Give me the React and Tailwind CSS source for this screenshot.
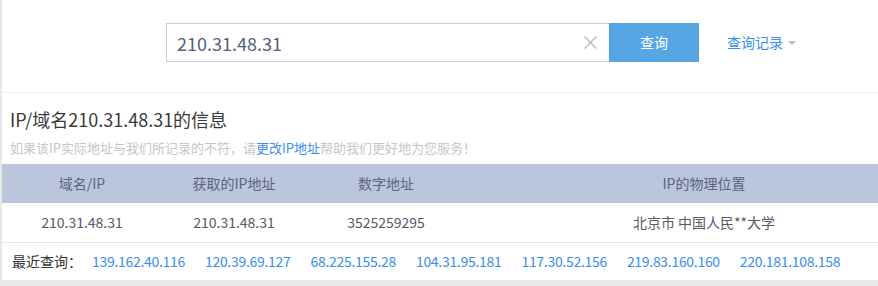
export default function App() {
  const recent = [
    "139.162.40.116",
    "120.39.69.127",
    "68.225.155.28",
    "104.31.95.181",
    "117.30.52.156",
    "219.83.160.160",
    "220.181.108.158",
  ];

  return (
    <div
      className="w-[878px] h-[286px] overflow-hidden bg-[#e8e8e8] pl-[2px]"
      style={{ fontFamily: '"Noto Sans CJK SC", "Noto Sans", sans-serif' }}
    >
      <div className="bg-white h-[280px]">
        {/* search bar */}
        <div className="h-[93px] border-b border-[#f0f0f0] flex items-start pt-[23px] pl-[164px]">
          <div className="flex items-center w-[443px] h-[39px] border border-[#c5cde0] border-r-0 pl-[10px] pr-[12px]">
            <span className="flex-1 text-[18px] text-[#55607e] leading-none">210.31.48.31</span>
            <svg width="13" height="13" viewBox="0 0 13 13" className="text-[#b5b5b5]">
              <path d="M0.5 0.5 L12.5 12.5 M12.5 0.5 L0.5 12.5" stroke="currentColor" strokeWidth="1.2" />
            </svg>
          </div>
          <button className="w-[90px] h-[39px] bg-[#55a6e2] text-white text-[14px]">查询</button>
          <div className="ml-[28px] h-[39px] flex items-center text-[14px] text-[#3a8ee6]">
            查询记录
            <span className="ml-[5px] w-0 h-0 border-x-[4px] border-x-transparent border-t-[4px] border-t-[#bdbdbd]" />
          </div>
        </div>

        {/* title */}
        <div className="pl-[8px] pt-[14px]">
          <h1 className="text-[18px] leading-[24px] text-[#3a3a3a]">IP/域名210.31.48.31的信息</h1>
          <p className="mt-[7px] text-[13px] leading-[20px] text-[#c6c6c6]">
            如果该IP实际地址与我们所记录的不符，请<span className="text-[#3a8ee6]">更改IP地址</span>帮助我们更好地为您服务！
          </p>
        </div>

        {/* table */}
        <div className="mt-[6px] w-[940px] text-[14px]">
          <div className="flex h-[39px] items-center bg-[#bbc5dc] text-[#5b6480]">
            <div className="w-[160px] text-center">域名/IP</div>
            <div className="w-[144px] text-center">获取的IP地址</div>
            <div className="w-[160px] text-center">数字地址</div>
            <div className="w-[476px] text-center">IP的物理位置</div>
          </div>
          <div className="flex h-[40px] items-center border-b border-[#e8e8e8] text-[#555a6a]">
            <div className="w-[160px] text-center">210.31.48.31</div>
            <div className="w-[144px] text-center">210.31.48.31</div>
            <div className="w-[160px] text-center">3525259295</div>
            <div className="w-[476px] text-center">北京市 中国人民**大学</div>
          </div>
        </div>

        {/* recent */}
        <div className="flex items-center h-[36px] pl-[10px] text-[14px]">
          <span className="text-[#333] w-[80px]">最近查询：</span>
          <div className="flex gap-[20px] tracking-[-0.3px]">
            {recent.map((ip) => (
              <a key={ip} className="text-[#3a8ee6]">{ip}</a>
            ))}
          </div>
        </div>
      </div>
    </div>
  );
}
